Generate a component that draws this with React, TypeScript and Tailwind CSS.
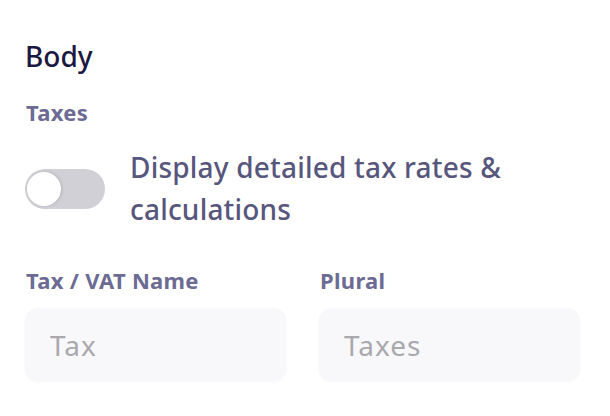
export default function App() {
  return (
    <div
      className="min-h-screen bg-white pl-[25px] pr-[30px] pt-[38px]"
      style={{ fontFamily: '"Noto Sans", "Open Sans", sans-serif' }}
    >
      <h2 className="text-[28px] font-medium leading-[36px] text-[#1b1842]">Body</h2>

      <div className="mt-[23px] pl-[1px] text-[22px] font-bold leading-[30px] tracking-[0.3px] text-[#6c6b93]">Taxes</div>

      <div className="mt-[19px] flex items-start gap-[25px]">
        <button className="mt-[23px] flex h-[40px] w-[80px] shrink-0 items-center rounded-full bg-[#d1d0d6] pl-[2px]">
          <span className="h-[34px] w-[34px] rounded-full bg-white shadow-[1px_0_3px_rgba(0,0,0,0.15)]" />
        </button>
        <p className="text-[28px] font-medium leading-[42px] tracking-[0.2px] text-[#57567c]">
          Display detailed tax rates &amp; calculations
        </p>
      </div>

      <div className="mt-[35px] grid grid-cols-2 gap-[33px]">
        {[
          { label: "Tax / VAT Name", ph: "Tax" },
          { label: "Plural", ph: "Taxes" },
        ].map((f) => (
          <div key={f.label} className="flex flex-col">
            <label className="pl-[1px] text-[22px] font-bold leading-[30px] tracking-[0.3px] text-[#6c6b93]">{f.label}</label>
            <input
              placeholder={f.ph}
              className="mt-[13px] h-[73px] w-full rounded-[13px] bg-[#f8f8fa] px-[25px] text-[28px] tracking-[1px] text-[#444] shadow-[0_1px_3px_rgba(0,0,0,0.04)] outline-none placeholder:text-[#a9a9ad]"
            />
          </div>
        ))}
      </div>
    </div>
  );
}
